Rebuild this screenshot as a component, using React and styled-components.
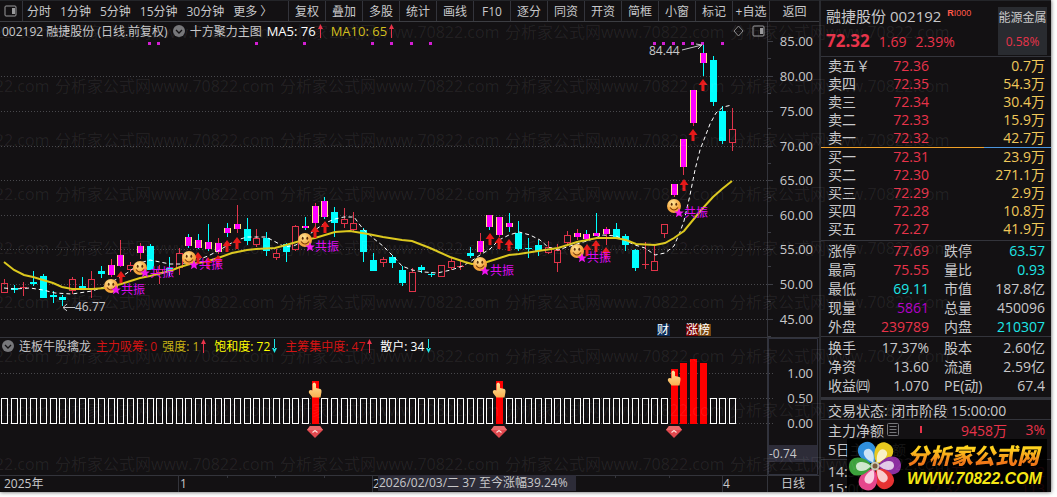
import React from "react";
import styled, { createGlobalStyle, css } from "styled-components";

const GlobalStyle = createGlobalStyle`
    * { box-sizing: border-box; }

    body {
        margin: 0;
        background-color: #ffffff;
        font-family: "Open Sans", "Noto Sans CJK SC", sans-serif;
        font-size: 12px;
        color: #c8c8ca;
    }

    button {
        font: inherit;
        color: inherit;
        background: none;
        border: 0;
        padding: 0;
        white-space: nowrap;
        cursor: pointer;
    }

    svg { display: block; }
    svg text { font-family: inherit; }
`;

const RED = "#e8334a";
const CYAN = "#00ffff";
const MAGENTA = "#ff00ff";
const YELLOW = "#f0c85a";
const LINE = "#33343b";

const Page = styled.div`
    padding: 0 6px 5px 0;
`;

const Terminal = styled.div`
    position: relative;
    display: flex;
    overflow: hidden;
    background-color: #131113;
    box-shadow: 0 0 4px rgba(0, 0, 0, 0.7);
`;

const ChartColumn = styled.main`
    flex: 1;
    min-width: 0;
`;

/* 상단 툴바 */
const Toolbar = styled.nav`
    display: flex;
    justify-content: space-between;
    height: 22px;
    border-top: 1px solid #242529;
    border-bottom: 1px solid #3c3d42;
`;

const Periods = styled.div`
    display: flex;
    align-items: center;
    gap: 9px;
`;

const LayoutButton = styled.button`
    display: flex;
    align-items: center;
    width: 23px;
    height: 100%;
    padding-left: 4px;
    margin-right: -5px;
    border-right: 1px solid ${LINE};
`;

const Tools = styled.div`
    display: flex;
`;

const ToolButton = styled.button`
    width: ${({ $wide }) => ($wide ? 50 : 37)}px;
    border-left: 1px solid ${LINE};
`;

/* 차트 패널: 제목과 그래프가 같은 칸에 겹침 */
const ChartPanel = styled.section`
    display: grid;

    & > * { grid-area: 1 / 1; }
    & > svg { width: 100%; height: auto; }
`;

const PanelTitle = styled.header`
    z-index: 1;
    align-self: start;
    display: flex;
    align-items: center;
    height: 18px;
    gap: 5px;
    padding: 0 54px 0 2px;
    white-space: nowrap;
`;

const Value = styled.span`
    display: flex;
    align-items: center;
    gap: 2px;
    font-size: ${({ $large }) => ($large ? 13 : 12)}px;
    color: ${({ $color }) => $color};

    & svg { margin-right: 3px; }
`;

const Corner = styled.span`
    display: flex;
    gap: 8px;
    margin-left: auto;
`;

/* 배경 워터마크 */
const Watermark = styled.div`
    position: absolute;
    inset: 5px 0 0 -170px;
    overflow: hidden;
    pointer-events: none;
    font-size: 16px;
    line-height: 54px;
    color: rgba(255, 255, 255, 0.07);
`;

const WatermarkRow = styled.div`
    display: flex;

    & span { flex: 0 0 225px; white-space: nowrap; }
`;

/* 오른쪽 시세 */
const QuotePanel = styled.aside`
    position: relative;
    display: flex;
    flex-direction: column;
    width: 232px;
    border-left: 2px solid #2a2b30;
    font-size: 14px;
`;

const StockHead = styled.header`
    display: flex;
    justify-content: space-between;
    height: 57px;
    padding: 6px 4px 0 5px;
    border-top: 1px solid #242529;
    border-bottom: 1px solid ${LINE};
    white-space: nowrap;
`;

const StockName = styled.h1`
    margin: 0;
    font-size: 15px;
    font-weight: 400;
    line-height: 18px;
`;

const IndexTag = styled.sup`
    margin-left: 6px;
    font-family: "Liberation Sans", sans-serif;
    font-size: 9px;
    line-height: 9px;
    color: #ff5a4a;
`;

const PriceLine = styled.div`
    display: flex;
    align-items: baseline;
    gap: 9px;
    margin-top: 4px;
    line-height: 24px;
    color: ${RED};

    & strong { font-size: 17px; }
`;

const Sector = styled.div`
    display: flex;
    flex-direction: column;
    align-items: center;
    justify-content: space-between;
    width: 49px;
    height: 48px;
    padding: 2px 0 4px;
    background-color: #292b30;
    font-size: 12px;
    line-height: 18px;

    & span { color: ${RED}; }
`;

const DataTable = styled.table`
    width: 100%;
    border-collapse: collapse;
    table-layout: fixed;
    white-space: nowrap;
    line-height: ${({ $row }) => $row}px;

    & th, & td {
        height: ${({ $row }) => $row}px;
        padding: 0;
        font-weight: 400;
        text-align: left;
    }
    & th:first-child { padding-left: 7px; }
    & td { text-align: right; }
    & td:last-child { padding-right: 6px; }
`;

const Cell = styled.td`
    color: ${({ $color }) => $color || "inherit"};
`;

const Block = styled.div`
    flex-shrink: 0;
    padding: ${({ $pad }) => $pad || "0"};
    border-bottom: ${({ $thick }) => ($thick ? 3 : 1)}px solid ${LINE};
`;

const BidAskBar = styled.div`
    display: flex;
    flex-shrink: 0;
    height: 1px;
    background-color: #4a96e0;

    & i {
        width: 71%;
        background-color: #f0a028;
    }
`;

const rowLine = css`
    display: flex;
    align-items: center;
    padding: 0 6px 0 7px;
    white-space: nowrap;
`;

const Status = styled.p`
    ${rowLine}
    height: 20px;
    margin: 0;
    border-bottom: 1px solid ${LINE};
`;

const FlowRow = styled.div`
    ${rowLine}
    height: 19px;
    color: ${RED};

    & span:first-child { color: #c8c8ca; margin-right: 3px; }
    & span:last-child { width: 38px; text-align: right; }
`;

const FlowMark = styled.i`
    width: 2px;
    height: 7px;
    margin: 0 auto 0 21px;
    background-color: ${RED};
`;

const TickList = styled.div`
    flex: 1 1 0;
    min-height: 0;
    height: 0;
    overflow: hidden;
    margin-top: 1px;
    padding-top: 3px;
    border-top: 1px solid ${LINE};
`;

const Tick = styled.div`
    ${rowLine}
    justify-content: space-between;
    height: 17px;

    & span { color: ${RED}; }
`;

const SiteLogo = styled.a`
    position: absolute;
    right: 4px;
    bottom: 0;
    display: flex;
    align-items: center;
    width: 200px;
    height: 53px;
    padding-left: 2px;
    background-color: rgba(0, 0, 0, 0.9);
    text-decoration: none;
    white-space: nowrap;
`;

const SiteText = styled.span`
    display: flex;
    flex-direction: column;
    margin-left: 6px;
`;

const SiteName = styled.span`
    font-size: 22px;
    font-weight: 900;
    font-style: italic;
    line-height: 27px;
    background: linear-gradient(#ffd21e 25%, #f07818 75%);
    background-clip: text;
    -webkit-background-clip: text;
    color: transparent;
`;

const SiteUrl = styled.span`
    font-family: "Liberation Sans", sans-serif;
    font-size: 16px;
    font-weight: 700;
    font-style: italic;
    line-height: 20px;
    color: #f5e614;
`;

// [종류, 고가 y, 몸통 위, 몸통 아래, 저가 y, 심지 색]
// u: 빈 양봉, d: 음봉, m: 강조 양봉
const candles = [
    ["u", 279, 283, 292, 292], ["d", 285, 288, 290, 293], ["u", 282, 287, 287, 296],
    ["d", 271, 282, 284, 286], ["d", 274, 276, 298, 298], ["d", 291, 295, 297, 303],
    ["d", 295, 297, 300, 306], ["u", 277, 279, 290, 294], ["d", 277, 286, 289, 289],
    ["u", 271, 279, 289, 298], ["d", 266, 271, 274, 278], ["m", 259, 265, 275, 277, "r"],
    ["m", 240, 255, 266, 267, "r"], ["u", 262, 265, 269, 272], ["m", 243, 246, 253, 259, "r"],
    ["d", 244, 246, 270, 270], ["u", 265, 269, 272, 284], ["d", 257, 268, 272, 276],
    ["u", 248, 253, 267, 275], ["m", 234, 237, 246, 248, "c"], ["m", 234, 240, 248, 249, "c"],
    ["m", 224, 242, 249, 251, "c"], ["m", 238, 243, 252, 254, "r"], ["m", 223, 228, 233, 237, "c"],
    ["m", 205, 224, 229, 233, "r"], ["d", 218, 229, 241, 245], ["u", 229, 238, 244, 247],
    ["d", 232, 238, 251, 256], ["u", 249, 253, 257, 260], ["d", 243, 244, 252, 262],
    ["u", 225, 226, 249, 251], ["m", 217, 226, 228, 230, "c"], ["m", 203, 206, 223, 227, "r"],
    ["m", 197, 201, 217, 219, "c"], ["d", 207, 212, 223, 237], ["u", 208, 219, 223, 228],
    ["u", 212, 223, 229, 231], ["d", 228, 230, 252, 262], ["d", 253, 260, 271, 271],
    ["u", 257, 259, 262, 267], ["d", 255, 257, 263, 268], ["d", 266, 270, 283, 286],
    ["u", 268, 272, 291, 291], ["d", 265, 267, 270, 273], ["d", 272, 274, 275, 277],
    ["u", 265, 265, 276, 276], ["u", 258, 261, 267, 270], ["u", 260, 266, 266, 270],
    ["d", 247, 253, 256, 258], ["m", 233, 241, 252, 254, "r"], ["m", 215, 215, 227, 230, "c"],
    ["m", 217, 217, 235, 237, "r"], ["m", 213, 223, 227, 232, "c"], ["d", 221, 233, 249, 251],
    ["d", 238, 248, 249, 258], ["d", 240, 245, 251, 256], ["u", 241, 247, 252, 254],
    ["u", 244, 250, 262, 272], ["u", 231, 235, 242, 245], ["m", 229, 233, 237, 240, "r"],
    ["m", 230, 234, 239, 241, "c"], ["m", 213, 233, 236, 236, "c"], ["m", 227, 229, 234, 245, "r"],
    ["d", 223, 229, 239, 239], ["d", 234, 236, 245, 251], ["d", 249, 250, 268, 271],
    ["u", 242, 264, 264, 269], ["u", 245, 261, 270, 270], ["u", 224, 224, 233, 238],
    ["m", 184, 184, 195, 197, "r"], ["m", 139, 139, 167, 175, "r"], ["m", 90, 90, 123, 126, "r"],
    ["m", 45, 53, 63, 76, "c"], ["d", 56, 60, 102, 106], ["d", 106, 111, 141, 144],
    ["u", 108, 129, 142, 151],
];

const barX = (i) => Math.round(4.5 + i * 9.707 - 0.5);

const ma10 = "4,262 14,270 24,275 33,277 43,280 53,283 62,287 72,289 92,289 106,288 121,284 140,278 150,276 170,271 180,267 190,264 205,262 218,258 232,253 247,250 256,249 275,248 286,245 300,241 315,238 335,232 350,231 368,234 383,237 402,240 412,241 430,248 450,257 465,262 472,264 487,262 509,255 519,254 538,251 558,248 577,242 597,238 616,238 626,240 636,244 655,245 665,243 674,238 684,231 693,220 703,208 713,197 722,189 732,181";
const ma5 = "4,288 15,289 30,288 43,290 55,293 72,294 92,291 104,287 113,281 121,277 130,271 140,263 150,260 160,262 170,264 180,264 190,262 200,259 208,256 218,251 228,245 237,240 247,237 266,237 270,239 285,247 296,245 305,238 315,230 325,223 335,219 344,217 354,217 363,229 373,238 383,246 393,256 402,266 412,270 424,272 437,273 451,270 460,267 470,262 480,255 490,249 499,240 509,235 519,232 530,235 540,240 548,247 558,250 570,246 577,244 590,240 603,235 616,236 626,241 635,245 645,248 655,255 665,253 674,246 680,232 684,221 690,195 695,170 700,150 710,124 716,113 723,107 732,105";

const signals = [[111, 286, 4], [140, 268, 5], [189, 258, 7], [305, 240, 7], [480, 264, 7], [577, 251, 7], [674, 206, 7]];
const arrows = [[121, 277], [198, 258], [208, 263], [218, 261], [227, 246], [237, 243], [315, 232], [325, 227], [490, 239], [499, 243], [509, 245], [587, 250], [596, 246], [606, 253], [684, 185], [693, 135], [703, 85]];
const dots = [149, 158, 256, 304, 372, 391, 411, 430, 654, 663, 673, 683, 692, 702, 722];
const prices = [["85.00", 41], ["80.00", 76], ["75.00", 111], ["70.00", 146], ["65.00", 180], ["60.00", 215], ["55.00", 249], ["50.00", 284], ["45.00", 319]];
const redBars = { 32: 381, 51: 381, 69: 369, 70: 363, 71: 359, 72: 363 };

const tools = ["复权", "叠加", "多股", "统计", "画线", "F10", "逐分", "同资", "开资", "简框", "小窗", "标记", "+自选"];

const asks = [["卖五￥", "72.36", "0.7万"], ["卖四", "72.35", "54.3万"], ["卖三", "72.34", "30.4万"], ["卖二", "72.33", "15.9万"], ["卖一", "72.32", "42.7万"]];
const bids = [["买一", "72.31", "23.9万"], ["买二", "72.30", "271.1万"], ["买三", "72.29", "2.9万"], ["买四", "72.28", "10.8万"], ["买五", "72.27", "41.9万"]];
const dayStats = [
    ["涨停", "77.69", RED, "跌停", "63.57", "#1ee6e6"],
    ["最高", "75.55", RED, "量比", "0.93", "#1ee6e6"],
    ["最低", "69.11", "#1ee6e6", "市值", "187.8亿"],
    ["现量", "5861", "#b400c8", "总量", "450096"],
    ["外盘", "239789", RED, "内盘", "210307", "#1ee6e6"],
];
const baseStats = [
    ["换手", "17.37%", null, "股本", "2.60亿"],
    ["净资", "13.60", null, "流通", "2.59亿"],
    ["收益㈣", "1.070", null, "PE(动)", "67.4"],
];

function PaneIcon() {
    return (
        <svg width="13" height="12" viewBox="0 0 13 12" fill="none" stroke="#9a9a9c">
            <rect x="1" y="1" width="11" height="10" rx="1" />
            <path d="M8 3h3v6H8z" fill="#9a9a9c" stroke="none" />
        </svg>
    );
}

function Toggle() {
    return (
        <svg width="12" height="12" viewBox="0 0 12 12">
            <circle cx="6" cy="6" r="6" fill="#77777a" />
            <path d="M3 5l3 3 3-3" fill="none" stroke="#131113" strokeWidth="1.3" />
        </svg>
    );
}

function Trend({ down }) {
    return (
        <svg width="5" height="14" viewBox="0 0 5 14">
            {down
                ? <path d="M2 0h1v10H2zM2.500 14L5 9H0z" fill="#1ee6e6" />
                : <path d="M2 4h1v10H2zM2.500 0L5 5H0z" fill={RED} />}
        </svg>
    );
}

function Candle({ x, data }) {
    const [kind, high, top, bottom, low, wick] = data;
    const h = Math.max(bottom - top, 1);
    if (kind === "u") {
        return (
            <g stroke="#e0344a" fill="none">
                <path d={`M${x + 0.5} ${high}V${top}M${x + 0.5} ${bottom}V${low}`} />
                {top === bottom
                    ? <path d={`M${x - 3} ${top + 0.5}h7`} />
                    : <rect x={x - 2.5} y={top + 0.5} width="6" height={h} />}
            </g>
        );
    }
    if (kind === "d") {
        return (
            <g fill={CYAN}>
                <rect x={x} y={high} width="1" height={low - high} />
                <rect x={x - 3} y={top} width="7" height={h} />
            </g>
        );
    }
    return (
        <g>
            <rect x={x} y={high} width="1" height={low - high} fill={wick === "c" ? CYAN : "#e0344a"} />
            <rect x={x - 3} y={top} width="7" height={h} fill="#ffe680" />
            <rect x={x - 2} y={top} width="5" height={h} fill={MAGENTA} />
        </g>
    );
}

function Smiley({ x, y }) {
    return (
        <g transform={`translate(${x} ${y})`}>
            <circle r="7" fill="url(#face)" />
            <ellipse cx="-2.300" cy="-1.800" rx="0.9" ry="1.500" fill="#5a2a08" />
            <ellipse cx="2.300" cy="-1.800" rx="0.9" ry="1.500" fill="#5a2a08" />
            <path d="M-4 1.500Q0 6.500 4 1.500" fill="none" stroke="#7a3808" strokeWidth="1.200" />
        </g>
    );
}

function Hand({ x, y }) {
    return (
        <path
            transform={`translate(${x} ${y})`}
            fill="url(#hand)"
            d="M-2.500 2Q-1-1 1 2V6L5.500 7Q6.800 7.500 6.500 10L5.500 15.500H-2.500L-6 11Q-6.800 8-4 8L-2.500 8.500Z"
        />
    );
}

function Gem({ x }) {
    return (
        <g transform={`translate(${x} 426)`}>
            <path d="M-5 0H5L8 4 0 12-8 4Z" fill="#e0484e" />
            <path d="M-5 0H5L8 4H-8Z" fill="#e86a6c" />
            <path d="M-2.500 6.500L0 4.500 2.500 6.500" fill="none" stroke="#ffe0dc" strokeWidth="1.200" />
        </g>
    );
}

function PriceChart() {
    return (
        <svg viewBox="0 22 819 315" fontSize="12" fill="#c8c8ca">
            <defs>
                <radialGradient id="face" cx="40%" cy="30%">
                    <stop offset="0" stopColor="#ffe89a" />
                    <stop offset="1" stopColor="#f5a53c" />
                </radialGradient>
            </defs>
            {prices.map(([label, y]) => (
                <g key={label}>
                    {y > 41 && <path d={`M1 ${y + 0.5}H767`} stroke="#48484c" strokeDasharray="1 2" />}
                    <path d={`M768 ${y + 0.5}h5M768 ${y + 17.5}h3`} stroke="#3c3d44" />
                    <text x="813" y={y + 5} fontSize="13" textAnchor="end">{label}</text>
                </g>
            ))}
            <path d="M767.500 22V337" stroke={LINE} />

            {candles.map((c, i) => <Candle key={i} x={barX(i)} data={c} />)}
            {dots.map((x) => <rect key={x} x={x - 1} y="42" width="3" height="3" fill="#d21ed2" />)}

            <polyline points={ma5} fill="none" stroke="#ffffff" strokeDasharray="4 3" />
            <polyline points={ma10} fill="none" stroke="#dcc81e" strokeWidth="2" />

            {arrows.map(([x, y]) => (
                <path key={x} d={`M${x} ${y - 6}l4.500 6h-3v6h-3v-6h-3z`} fill="#e61919" />
            ))}
            {signals.map(([x, y, dy]) => (
                <g key={x}>
                    <Smiley x={x} y={y} />
                    <path
                        transform={`translate(${x + 5} ${y + dy}) scale(1.2)`}
                        d="M0-4L1.200-1.300 4-1.300 1.800.600 2.600 3.500 0 1.800-2.600 3.500-1.800.600-4-1.300-1.200-1.300Z"
                        fill="#f014f0"
                    />
                    <text x={x + 10} y={y + dy + 4} fill="#dc0af0">共振</text>
                </g>
            ))}

            <text x="649" y="55">84.44</text>
            <path d="M682 50L702 45M696 44l6 1-4 4" fill="none" stroke="#c8c8ca" />
            <text x="75" y="311">46.77</text>
            <path d="M75 307.500H63M67 304l-4 3.500 4 3.500" fill="none" stroke="#c8c8ca" />

            <rect x="657" y="324" width="13" height="12" fill="#0a2c58" />
            <rect x="686" y="324" width="12" height="12" fill="#780000" />
            <rect x="698" y="324" width="13" height="12" fill="#784610" />
            <text x="657" y="334" fill="#ffffff">财</text>
            <text x="686" y="334" fill="#ffffff">涨榜</text>
        </svg>
    );
}

function SignalChart() {
    return (
        <svg viewBox="0 337 819 138" fontSize="13" fill="#c8c8ca">
            <defs>
                <linearGradient id="hand" x2="0" y2="1">
                    <stop offset="0" stopColor="#ffe6a0" />
                    <stop offset="1" stopColor="#f8b050" />
                </linearGradient>
            </defs>
            <path d="M0 337.500H819" stroke={LINE} />
            {[["1.00", 373], ["0.50", 398], ["0.00", 423]].map(([label, y]) => (
                <g key={label}>
                    <path d={`M1 ${y + 0.5}H773`} stroke="#48484c" strokeDasharray="1 2" />
                    <text x="813" y={y + 5} textAnchor="end">{label}</text>
                </g>
            ))}
            <path d="M767.500 337V475" stroke={LINE} />
            <path d="M769 338.500H817.500V474.500H768.500V338" fill="none" stroke="#30323e" />
            <rect x="769" y="445" width="48" height="17" fill="#2d2c38" />
            <text x="769" y="458" fontSize="12">-0.74</text>

            {candles.map((c, i) => (
                redBars[i]
                    ? <rect key={i} x={barX(i) - 3} y={redBars[i]} width="7" height={424 - redBars[i]} fill="#ff0000" />
                    : <rect key={i} x={barX(i) - 2.5} y="398.500" width="6" height="25" fill="#131113" stroke="#ffffff" />
            ))}
            {[32, 51, 69].map((i) => (
                <g key={i}>
                    <Hand x={barX(i)} y={redBars[i] + 1} />
                    <Gem x={barX(i)} />
                </g>
            ))}
        </svg>
    );
}

function TimeAxis() {
    return (
        <svg viewBox="0 475 819 17" fontSize="12" fill="#c8c8ca">
            <path d="M0 475.500H819M178.500 475v17M372.500 475v17M722.500 475v17M767.500 475v17M227.500 475v3M275.500 475v3M324.500 475v3M615.500 475v3M669.500 475v3" stroke={LINE} />
            <text x="4" y="488">2025年</text>
            <text x="180" y="488">1</text>
            <text x="373" y="488">2</text>
            <rect x="378" y="475" width="198" height="16" fill="#2d2c38" />
            <text x="379" y="487">2026/02/03/二 37 至今涨幅39.24%</text>
            <text x="723" y="488">4</text>
            <text x="781" y="488">日线</text>
        </svg>
    );
}

function QuoteColumns() {
    return (
        <colgroup>
            <col width="50" />
            <col width="58" />
            <col width="15" />
            <col width="50" />
            <col />
        </colgroup>
    );
}

function OrderBook({ rows }) {
    return (
        <DataTable $row={18}>
            <QuoteColumns />
            <tbody>
                {rows.map(([label, price, amount]) => (
                    <tr key={label}>
                        <th scope="row">{label}</th>
                        <Cell $color={RED}>{price}</Cell>
                        <Cell $color={YELLOW} colSpan={3}>{amount}</Cell>
                    </tr>
                ))}
            </tbody>
        </DataTable>
    );
}

function Stats({ rows }) {
    return (
        <DataTable $row={19}>
            <QuoteColumns />
            <tbody>
                {rows.map(([a, av, ac, b, bv, bc]) => (
                    <tr key={a}>
                        <th scope="row">{a}</th>
                        <Cell $color={ac}>{av}</Cell>
                        <td />
                        <th scope="row">{b}</th>
                        <Cell $color={bc}>{bv}</Cell>
                    </tr>
                ))}
            </tbody>
        </DataTable>
    );
}

function Flower() {
    const petals = [["#2f8fdc", -28], ["#e8c81e", 32], ["#8c2fa0", 88], ["#e63232", 145], ["#e6468c", 205], ["#3ca03c", 268]];
    return (
        <svg width="52" height="50" viewBox="-26 -25 52 50">
            {petals.map(([color, angle]) => (
                <g key={angle} transform={`rotate(${angle})`}>
                    <path d="M0-3C-12-10-12-26 0-26S12-10 0-3Z" fill={color} />
                    <path d="M0-4C-6-10-6-19 0-19S6-10 0-4Z" fill="#ffffff" opacity="0.75" />
                </g>
            ))}
            <circle r="4.500" fill="#c8c8b4" />
            <circle r="2.500" fill="#7a5a3c" />
        </svg>
    );
}

export default function App() {
    return (
        <Page>
            <GlobalStyle />
            <Terminal>
                <ChartColumn>
                    <Toolbar>
                        <Periods>
                            <LayoutButton aria-label="布局"><PaneIcon /></LayoutButton>
                            {["分时", "1分钟", "5分钟", "15分钟", "30分钟", "更多 〉"].map((p) => (
                                <button key={p}>{p}</button>
                            ))}
                        </Periods>
                        <Tools>
                            {tools.map((t) => <ToolButton key={t}>{t}</ToolButton>)}
                            <ToolButton $wide>返回</ToolButton>
                        </Tools>
                    </Toolbar>

                    <ChartPanel>
                        <PanelTitle>
                            <span>002192 融捷股份 (日线.前复权)</span>
                            <Toggle />
                            <span>十方聚力主图</span>
                            <Value $large $color="#ffffff">MA5: 76<Trend /></Value>
                            <Value $large $color="#d2be1e">MA10: 65<Trend /></Value>
                            <Corner>
                                <svg width="11" height="12" viewBox="0 0 11 12">
                                    <path d="M5.500 1L10 6 5.500 11 1 6Z" fill="none" stroke="#8c8c8e" />
                                </svg>
                                <PaneIcon />
                            </Corner>
                        </PanelTitle>
                        <PriceChart />
                    </ChartPanel>

                    <ChartPanel>
                        <PanelTitle>
                            <Toggle />
                            <span>连板牛股擒龙</span>
                            <Value $color="#d21414">主力吸筹: 0</Value>
                            <Value $color="#c8b414">强度: 1<Trend /></Value>
                            <Value $color="#ffff00">饱和度: 72<Trend down /></Value>
                            <Value $color="#d21414">主筹集中度: 47<Trend /></Value>
                            <Value $color="#ffffff">散户: 34<Trend down /></Value>
                        </PanelTitle>
                        <SignalChart />
                    </ChartPanel>
                    <TimeAxis />
                </ChartColumn>

                <QuotePanel>
                    <StockHead>
                        <div>
                            <StockName>融捷股份 002192<IndexTag><b>R</b>I000</IndexTag></StockName>
                            <PriceLine>
                                <strong>72.32</strong>
                                <span>1.69</span>
                                <span>2.39%</span>
                            </PriceLine>
                        </div>
                        <Sector>能源金属<span>0.58%</span></Sector>
                    </StockHead>
                    <OrderBook rows={asks} />
                    <BidAskBar><i /></BidAskBar>
                    <Block $pad="0 0 2px"><OrderBook rows={bids} /></Block>
                    <Block><Stats rows={dayStats} /></Block>
                    <Block $thick $pad="1px 0 2px"><Stats rows={baseStats} /></Block>
                    <Status>交易状态: 闭市阶段 15:00:00</Status>
                    <FlowRow>
                        <span>主力净额</span>
                        <svg width="12" height="13" viewBox="0 0 12 13" fill="none" stroke="#77777a">
                            <rect x="0.500" y="0.500" width="11" height="12" rx="1" />
                            <path d="M2.500 3.500h7M2.500 6.500h7M2.500 9.500h7" />
                        </svg>
                        <FlowMark />
                        <span>9458万</span>
                        <span>3%</span>
                    </FlowRow>
                    <FlowRow>
                        <span>5日主力净额</span>
                    </FlowRow>
                    <TickList>
                        <Tick>14:57<span>564万</span><span>22</span></Tick>
                        <Tick>15:00<span>72.32</span><span>113</span></Tick>
                    </TickList>
                    <SiteLogo href="#" aria-label="分析家公式网">
                        <Flower />
                        <SiteText>
                            <SiteName>分析家公式网</SiteName>
                            <SiteUrl>WWW.70822.COM</SiteUrl>
                        </SiteText>
                    </SiteLogo>
                </QuotePanel>

                <Watermark aria-hidden="true">
                    {[...Array(9)].map((_, row) => (
                        <WatermarkRow key={row}>
                            {[...Array(5)].map((_, i) => <span key={i}>分析家公式网www.70822.com</span>)}
                        </WatermarkRow>
                    ))}
                </Watermark>
            </Terminal>
        </Page>
    );
}
